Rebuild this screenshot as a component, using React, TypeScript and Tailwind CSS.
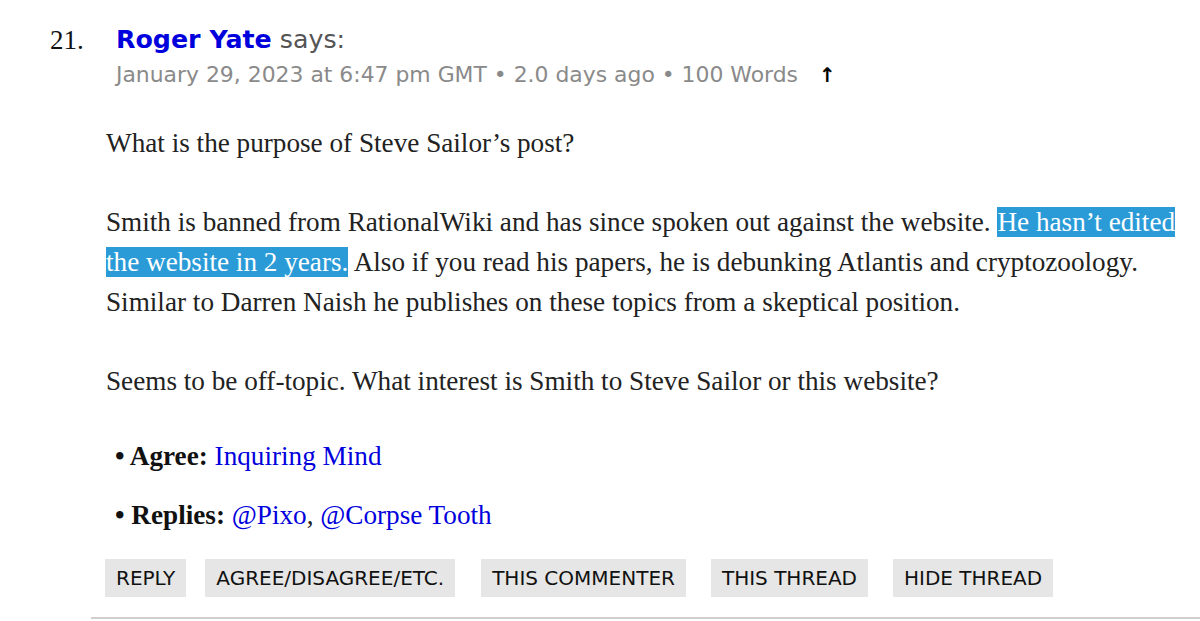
export default function App() {
  const serif = "font-['Liberation_Serif',serif]";
  const sans = "font-['DejaVu_Sans',sans-serif]";
  const btn =
    "bg-[#e6e6e6] h-[38px] px-[11px] flex items-center text-[20px] text-[#111] font-['DejaVu_Sans',sans-serif] whitespace-nowrap";

  return (
    <div className="w-[1200px] h-[621px] bg-white overflow-hidden relative">
      {/* Comment header */}
      <div className="flex items-start pt-[24px]">
        <div className={`${serif} shrink-0 w-[116px] pl-[50px] text-[27px] leading-[32px] text-[#111]`}>21.</div>
        <div className={`${sans} text-[25.3px] leading-[32px] whitespace-nowrap`}>
          <span className="font-bold text-[#0000dd]">Roger Yate</span>{" "}
          <span className="text-[#555]">says:</span>
        </div>
      </div>
      <div className={`${sans} ml-[116px] mt-[5px] text-[21.9px] leading-[28px] text-[#8a8a8a] flex items-center whitespace-nowrap`}>
        <span>January 29, 2023 at 6:47 pm GMT • 2.0 days ago • 100 Words</span>
        <span className="ml-[21px] text-black font-bold text-[20px]">↑</span>
      </div>

      {/* Comment body */}
      <div className={`${serif} ml-[106px] w-[1084px] mt-[34px] text-[27.2px] leading-[40px] text-[#222]`}>
        <p>What is the purpose of Steve Sailor’s post?</p>
        <p className="mt-[39px]">
          Smith is banned from RationalWiki and has since spoken out against the website.{" "}
          <span className="bg-[#2b9bd8] text-white">He hasn’t edited the website in 2 years.</span> Also if you read his
          papers, he is debunking Atlantis and cryptozoology. Similar to Darren Naish he publishes on these topics from a
          skeptical position.
        </p>
        <p className="mt-[39px]">Seems to be off-topic. What interest is Smith to Steve Sailor or this website?</p>

        <div className="ml-[9px] mt-[35px] flex flex-col gap-[19px]">
          <div>
            <span className="font-bold text-[#111]">• Agree:</span>{" "}
            <span className="text-[#0000dd]">Inquiring Mind</span>
          </div>
          <div>
            <span className="font-bold text-[#111]">• Replies:</span>{" "}
            <span className="text-[#0000dd]">@Pixo</span>, <span className="text-[#0000dd]">@Corpse Tooth</span>
          </div>
        </div>
      </div>

      {/* Action buttons */}
      <div className="ml-[105px] mt-[24px] flex items-center">
        <div className={btn}>REPLY</div>
        <div className={`${btn} ml-[19px]`}>AGREE/DISAGREE/ETC.</div>
        <div className={`${btn} ml-[26px]`}>THIS COMMENTER</div>
        <div className={`${btn} ml-[25px]`}>THIS THREAD</div>
        <div className={`${btn} ml-[25px]`}>HIDE THREAD</div>
      </div>

      <div className="ml-[91px] mt-[20px] h-[2px] bg-[#cfcfcf]" />
    </div>
  );
}
